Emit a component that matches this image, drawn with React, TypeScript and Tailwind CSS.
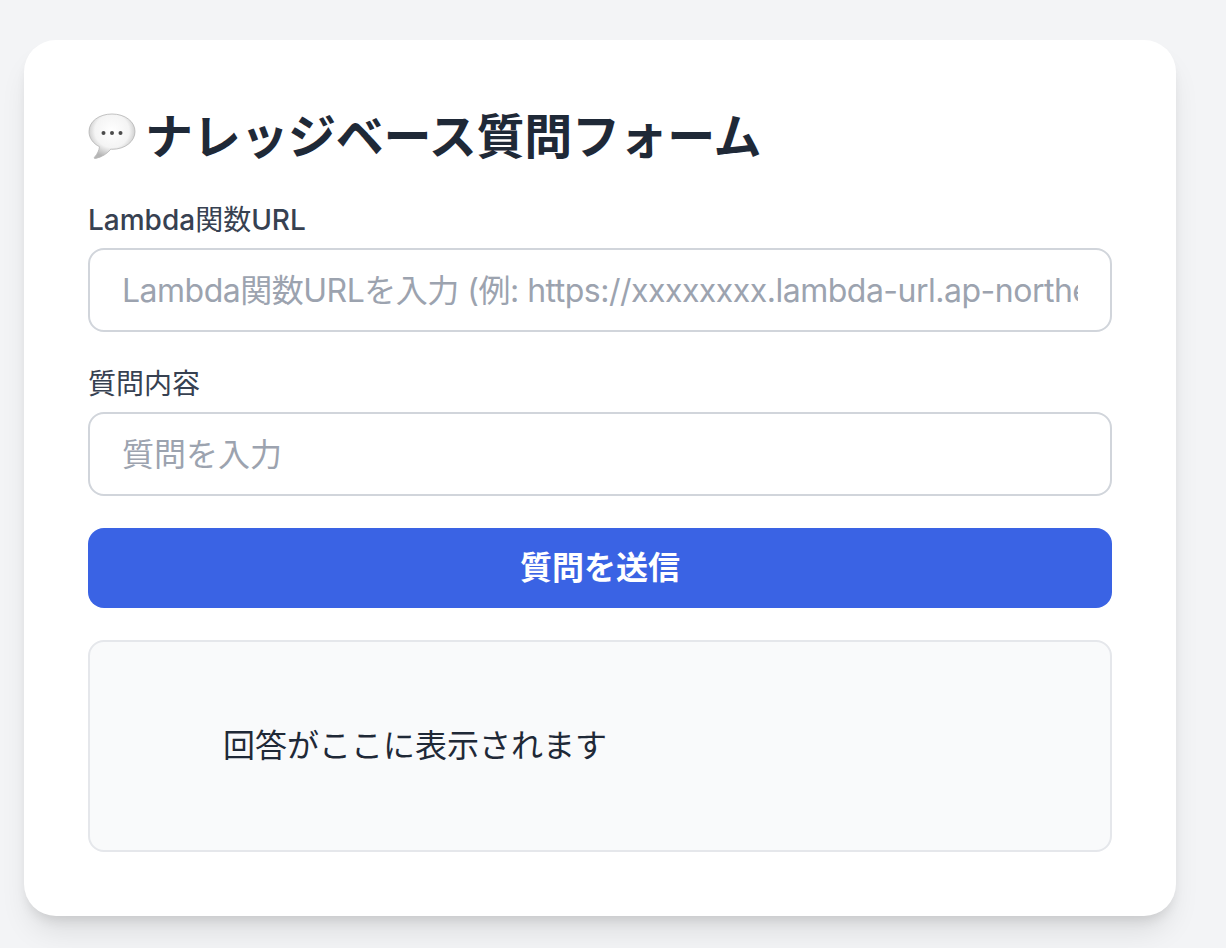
function ChatBubble() {
  return (
    <svg width="50" height="50" viewBox="0 0 50 50" className="shrink-0 -ml-px -mt-px">
      <defs>
        <radialGradient id="bubble" cx="50%" cy="38%" r="60%">
          <stop offset="0%" stopColor="#ffffff" />
          <stop offset="62%" stopColor="#f4f4f4" />
          <stop offset="100%" stopColor="#b5b5b5" />
        </radialGradient>
      </defs>
      <path
        d="M25 2C12 2 2 9.5 2 19.5c0 6.5 4 12 10.5 15.2-.4 3.6-1.9 7-5 10.5-.6.8 0 1.6 1 1.3 6.3-1.5 11.5-4.6 15.3-9.3.6 0 1.2.1 1.2.1 13 0 23-7.8 23-17.8S38 2 25 2Z"
        fill="url(#bubble)"
        stroke="#b5b5b5"
        strokeWidth="0.8"
      />
      <circle cx="16.5" cy="21" r="2" fill="#4b4b4b" />
      <circle cx="25" cy="21" r="2" fill="#4b4b4b" />
      <circle cx="33.5" cy="21" r="2" fill="#4b4b4b" />
    </svg>
  );
}

export default function App() {
  return (
    <div className="min-h-[948px] bg-[#f3f4f6] pt-10 pl-6 font-['Inter','Noto_Sans_CJK_JP',sans-serif]">
      <div className="w-[1152px] h-[876px] rounded-[32px] bg-white p-16 shadow-[0_20px_30px_-6px_rgba(0,0,0,0.1),0_8px_12px_-4px_rgba(0,0,0,0.1)]">
        <h1 className="flex items-center gap-2 h-[62px] mt-[2px] text-[48px] font-bold tracking-[-0.3px] text-[#1f2937] leading-[62px] whitespace-nowrap">
          <ChatBubble />
          ナレッジベース質問フォーム
        </h1>

        <label className="block mt-8 text-[28px] leading-10 text-[#374151]">
          <span className="font-medium">Lambda</span>関数<span className="font-medium">URL</span>
        </label>
        <input
          type="text"
          placeholder="Lambda関数URLを入力 (例: https://xxxxxxxx.lambda-url.ap-northeast-1.on.aws/)"
          className="block mt-2 w-full h-[84px] rounded-2xl border-2 border-[#d1d5db] px-8 text-[32px] tracking-[-0.5px] text-[#1f2937] placeholder:text-[#9ca3af] outline-none"
        />

        <label className="block mt-8 text-[28px] leading-10 text-[#374151]">
          質問内容
        </label>
        <input
          type="text"
          placeholder="質問を入力"
          className="block mt-2 w-full h-[84px] rounded-2xl border-2 border-[#d1d5db] px-8 text-[32px] text-[#1f2937] placeholder:text-[#9ca3af] outline-none"
        />

        <button
          type="button"
          className="block mt-8 w-full h-20 rounded-2xl bg-[#3a63e4] text-[32px] font-bold text-white"
        >
          質問を送信
        </button>

        <div className="mt-8 flex h-[212px] items-center rounded-2xl border-2 border-[#e5e7eb] bg-[#f9fafb] pl-[133px] text-[32px] text-[#1f2937]">
          回答がここに表示されます
        </div>
      </div>
    </div>
  );
}
